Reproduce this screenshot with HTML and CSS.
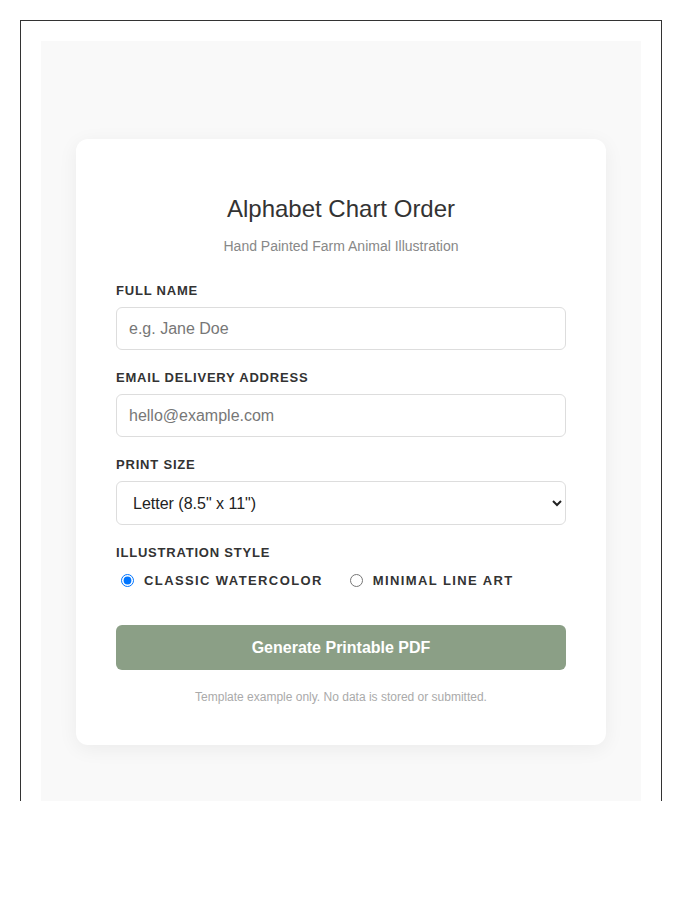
FILE: index.html
```html
<!DOCTYPE html>
<html lang="en">
<head>
  <meta charset="UTF-8">
  <meta name="viewport" content="width=device-width, initial-scale=1.0">
  <title>Alphabet Chart Order</title>
  <link rel="stylesheet" href="styles.css">
</head>
<body>
  <div class="frame">
    <div class="stage">
      <div class="card">
        <h1>Alphabet Chart Order</h1>
        <p class="subtitle">Hand Painted Farm Animal Illustration</p>
        <form id="orderForm">
          <div class="field">
            <label for="fullName">Full Name</label>
            <input type="text" id="fullName" placeholder="e.g. Jane Doe">
          </div>
          <div class="field">
            <label for="email">Email Delivery Address</label>
            <input type="email" id="email" placeholder="hello@example.com">
          </div>
          <div class="field">
            <label for="printSize">Print Size</label>
            <select id="printSize">
              <option>Letter (8.5" x 11")</option>
              <option>A4 (210 x 297 mm)</option>
              <option>Poster (18" x 24")</option>
            </select>
          </div>
          <div class="field">
            <label>Illustration Style</label>
            <div class="radio-row">
              <label class="radio"><input type="radio" name="style" checked> Classic Watercolor</label>
              <label class="radio"><input type="radio" name="style"> Minimal Line Art</label>
            </div>
          </div>
          <button type="submit">Generate Printable PDF</button>
        </form>
        <p class="note">Template example only. No data is stored or submitted.</p>
      </div>
    </div>
  </div>
</body>
</html>
```

FILE: styles.css
```css
* {
  box-sizing: border-box;
}
body {
  margin: 0;
  padding: 20px;
  font-family: 'Liberation Sans', Arial, sans-serif;
  color: #333;
  background-color: white;
}
.frame {
  width: 642px;
  border: 1px solid #333;
  border-bottom: none;
  padding: 20px 20px 0;
}
.stage {
  height: 760px;
  background-color: #f9f9f9;
  padding: 98px 35px 0;
}
.card {
  background-color: white;
  border-radius: 12px;
  padding: 56px 40px 41px;
  box-shadow: 0 4px 20px rgba(0, 0, 0, 0.06);
}
h1 {
  margin: 0 0 15px;
  font-size: 24px;
  line-height: 28px;
  font-weight: normal;
  text-align: center;
  color: #333;
}
.subtitle {
  margin: 0 0 29px;
  font-size: 14px;
  line-height: 16px;
  text-align: center;
  color: #888;
}
.field {
  margin-bottom: 20px;
}
.field > label {
  display: block;
  margin-bottom: 8px;
  font-size: 13px;
  line-height: 16px;
  font-weight: bold;
  text-transform: uppercase;
  letter-spacing: 0.8px;
  color: #333;
}
input[type="text"],
input[type="email"],
select {
  display: block;
  width: 100%;
  height: 43px;
  padding: 0 12px;
  font-family: inherit;
  font-size: 16px;
  color: #222;
  border: 1px solid #ddd;
  border-radius: 6px;
  background-color: white;
}
select {
  height: 44px;
}
input::placeholder {
  color: #777;
}
.radio-row {
  display: flex;
  align-items: center;
  gap: 22px;
  height: 22px;
}
.radio {
  display: flex;
  align-items: center;
  font-size: 13px;
  font-weight: bold;
  text-transform: uppercase;
  letter-spacing: 1.4px;
  color: #333;
}
.radio input {
  margin: 0 10px 0 5px;
}
button {
  display: block;
  width: 100%;
  height: 45px;
  margin-top: 34px;
  font-family: inherit;
  font-size: 16px;
  font-weight: bold;
  color: white;
  background-color: #8b9f86;
  border: none;
  border-radius: 6px;
  cursor: pointer;
}
.note {
  margin: 20px 0 0;
  font-size: 12px;
  line-height: 14px;
  text-align: center;
  color: #aaa;
}
```
